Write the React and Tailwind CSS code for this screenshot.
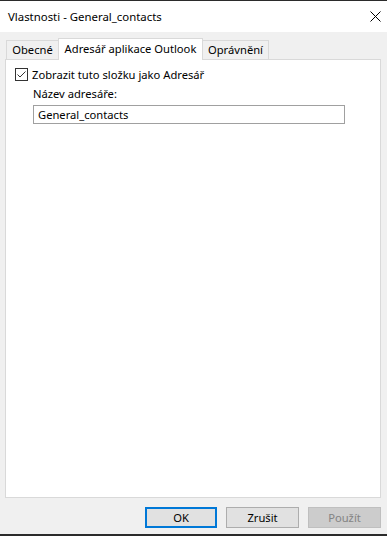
export default function App() {
  return (
    <div
      className="w-[387px] h-[536px] flex flex-col bg-[#f0f0f0] text-[11.2px] text-black border-t border-b-2 border-[#2b2b2b]"
      style={{ fontFamily: '"Noto Sans", "Open Sans", sans-serif' }}
    >
      {/* title bar */}
      <div className="h-[31px] bg-white flex items-center justify-between pl-2 pr-[3px] shrink-0">
        <span className="text-[11.4px] leading-none">Vlastnosti - General_contacts</span>
        <div className="w-[16px] h-[16px] flex items-center justify-center mr-[1px]">
          <svg width="11" height="11" viewBox="0 0 11 11">
            <path d="M0.5 0.5 L10.5 10.5 M10.5 0.5 L0.5 10.5" stroke="#000" strokeWidth="1" fill="none" />
          </svg>
        </div>
      </div>

      {/* tabs */}
      <div className="flex items-end pl-[6px] pt-[6px] h-[27px] shrink-0">
        <div className="w-[53px] h-[19px] flex items-center justify-center border border-b-0 border-[#d9d9d9] bg-[#f0f0f0] -mr-px">
          Obecné
        </div>
        <div className="relative z-10 w-[145px] h-[22px] flex items-center justify-center border border-b-0 border-[#d9d9d9] bg-white -mb-px pb-px">
          Adresář aplikace Outlook
        </div>
        <div className="w-[67px] h-[19px] flex items-center justify-center border border-b-0 border-[#d9d9d9] bg-[#f0f0f0] -ml-px">
          Oprávnění
        </div>
      </div>

      {/* panel */}
      <div className="mx-[5px] mr-[6px] h-[439px] bg-white border border-[#d9d9d9] shrink-0 pl-[9px] pt-[8px]">
        <label className="flex items-center gap-[4px] h-[13px]">
          <span className="w-[13px] h-[13px] border border-[#333] flex items-center justify-center bg-white">
            <svg width="11" height="11" viewBox="0 0 11 11">
              <path d="M1.5 5.5 L4 8 L9.5 2.5" stroke="#333" strokeWidth="1" fill="none" />
            </svg>
          </span>
          <span className="leading-none">Zobrazit tuto složku jako Adresář</span>
        </label>
        <div className="pl-[18px] pt-[7px]">
          <div className="leading-none h-[14px]">Název adresáře:</div>
          <div className="mt-[3px] w-[312px] h-[19px] border border-[#a0a0a0] flex items-center px-[4px] leading-none">
            General_contacts
          </div>
        </div>
      </div>

      {/* buttons */}
      <div className="flex justify-end gap-[9px] pr-[6px] pt-[9px]">
        <button className="w-[72px] h-[21px] border-2 border-[#0078d7] bg-[#e1e1e1] leading-none">OK</button>
        <button className="w-[73px] h-[21px] border border-[#adadad] bg-[#e1e1e1] leading-none">Zrušit</button>
        <button className="w-[73px] h-[21px] border border-[#bfbfbf] bg-[#cccccc] text-[#838383] leading-none">Použít</button>
      </div>
    </div>
  );
}
